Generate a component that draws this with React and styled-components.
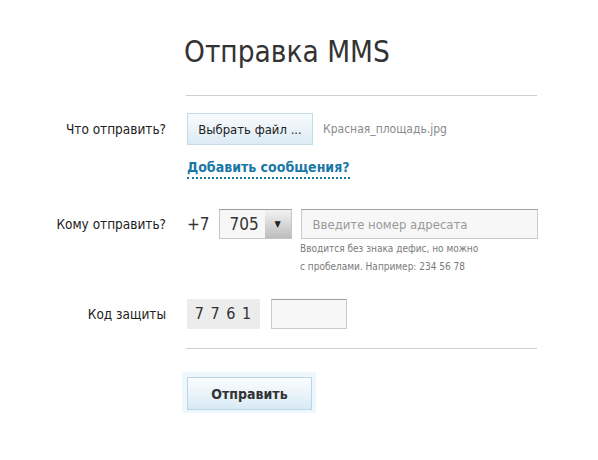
import React from 'react'
import styled, { createGlobalStyle } from 'styled-components'

const Global = createGlobalStyle`
  html, body { margin: 0; padding: 0; background: #fff; }
  body {
    font-family: "DejaVu Sans Condensed", "DejaVu Sans", sans-serif;
    color: #333;
  }
`

const Page = styled.div`
  width: 598px;
  height: 460px;
  padding-top: 34px;
  box-sizing: border-box;
`

const Title = styled.h1`
  margin: 0 0 0 184px;
  font-weight: normal;
  font-size: 29.5px;
  line-height: 36px;
  color: #333;
`

const Rule = styled.div`
  margin-left: 186px;
  width: 351px;
  border-top: 1px solid #cfcfcf;
  margin-top: ${p => p.$top}px;
`

const Form = styled.div`
  display: grid;
  grid-template-columns: 166px 351px;
  column-gap: 21px;
  align-items: start;
  margin-top: 17px;
`

const Label = styled.div`
  text-align: right;
  font-size: 13.5px;
  line-height: ${p => p.$h || 32}px;
  color: #222;
  margin-top: ${p => p.$top || 0}px;
`

const Field = styled.div`
  display: flex;
  flex-direction: column;
  margin-top: ${p => p.$top || 0}px;
`

const Line = styled.div`
  display: flex;
  align-items: center;
  gap: ${p => p.$gap || 10}px;
`

const FileButton = styled.button`
  width: 126px;
  height: 32px;
  border: 1px solid #c4dbe8;
  background: linear-gradient(#f8fbfd, #dcebf4);
  font-family: inherit;
  font-size: 13px;
  color: #222;
  padding: 0;
`

const FileName = styled.span`
  font-size: 12px;
  color: #8a8a8a;
`

const AddLink = styled.a`
  align-self: flex-start;
  margin-top: 13px;
  font-size: 14px;
  font-weight: bold;
  color: #1a78a8;
  text-decoration: none;
  line-height: 18px;
  padding-bottom: 1px;
  border-bottom: 2px dotted #1a78a8;
`

const Prefix = styled.span`
  font-size: 17px;
  color: #333;
`

const Select = styled.div`
  display: flex;
  width: 73px;
  height: 30px;
  box-sizing: border-box;
  border: 1px solid #c6c6c6;
  border-top-color: #9c9c9c;
  background: #f7f7f7;
`

const SelectValue = styled.span`
  flex: 1;
  font-size: 17px;
  line-height: 28px;
  padding-left: 10px;
  color: #333;
`

const SelectArrow = styled.span`
  width: 26px;
  display: flex;
  align-items: center;
  justify-content: center;
  background: linear-gradient(#f2f2f2, #bdbdbd);
  font-size: 9px;
  color: #222;
`

const TextInput = styled.input`
  box-sizing: border-box;
  width: ${p => p.$w}px;
  height: 30px;
  border: 1px solid #cacaca;
  border-top-color: #9e9e9e;
  background: #f7f7f7;
  font-family: inherit;
  font-size: 13px;
  padding: 0 11px;
  color: #333;
  outline: none;
  &::placeholder { color: #9a9a9a; }
`

const Hint = styled.div`
  margin: 1px 0 0 113px;
  font-size: 10px;
  line-height: 18px;
  color: #7a7a7a;
`

const Captcha = styled.div`
  width: 73px;
  height: 30px;
  background: #ececec;
  font-size: 16px;
  line-height: 30px;
  text-align: center;
  white-space: nowrap;
  letter-spacing: 1px;
  color: #333;
`

const SubmitWrap = styled.div`
  margin: 23px 0 0 182px;
  width: 134px;
  padding: 5px 4px 3px 5px;
  box-sizing: border-box;
  background: #eef7fc;
`

const Submit = styled.button`
  display: block;
  width: 125px;
  height: 33px;
  border: 1px solid #b9d6e6;
  background: linear-gradient(#fbfdfe, #d8eaf5);
  font-family: inherit;
  font-size: 14px;
  font-weight: bold;
  color: #333;
  padding: 0;
`

export default function App() {
  return (
    <Page>
      <Global />
      <Title>Отправка MMS</Title>
      <Rule $top={25} />
      <Form>
        <Label>Что отправить?</Label>
        <Field>
          <Line>
            <FileButton>Выбрать файл ...</FileButton>
            <FileName>Красная_площадь.jpg</FileName>
          </Line>
          <AddLink href="#">Добавить сообщения?</AddLink>
        </Field>

        <Label $top={30} $h={30}>Кому отправить?</Label>
        <Field $top={30}>
          <Line $gap={9}>
            <Prefix>+7</Prefix>
            <Select>
              <SelectValue>705</SelectValue>
              <SelectArrow>▼</SelectArrow>
            </Select>
            <TextInput $w={237} placeholder="Введите номер адресата" />
          </Line>
          <Hint>
            Вводится без знака дефис, но можно<br />
            с пробелами. Например: 234 56 78
          </Hint>
        </Field>

        <Label $top={23} $h={30}>Код защиты</Label>
        <Field $top={23}>
          <Line $gap={11}>
            <Captcha>7 7 6 1</Captcha>
            <TextInput $w={76} />
          </Line>
        </Field>
      </Form>
      <Rule $top={19} />
      <SubmitWrap>
        <Submit>Отправить</Submit>
      </SubmitWrap>
    </Page>
  )
}
